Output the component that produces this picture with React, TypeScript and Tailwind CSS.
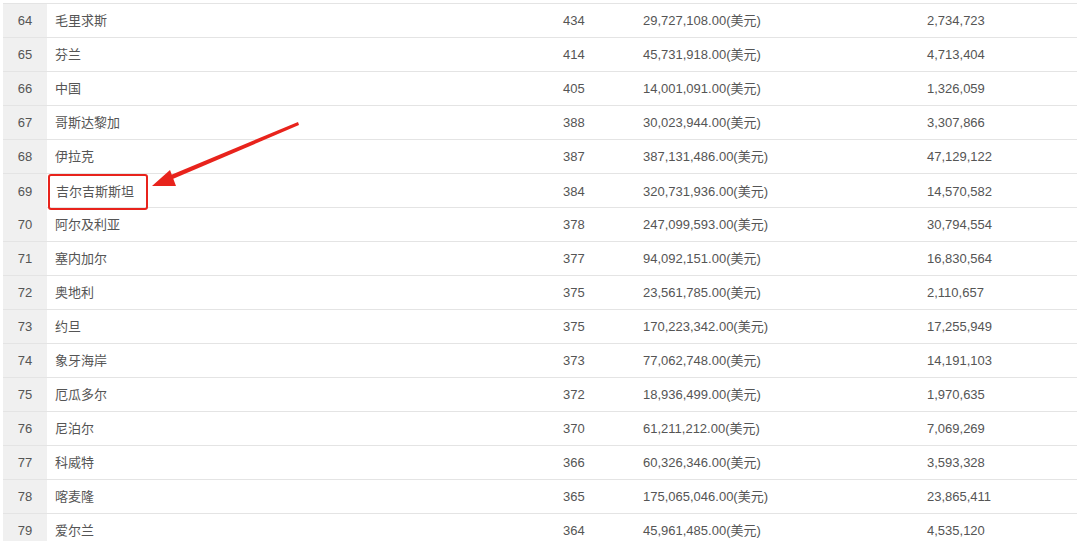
import React from "react";

const rows: [string, string, string, string, string][] = [
  ["64", "毛里求斯", "434", "29,727,108.00(美元)", "2,734,723"],
  ["65", "芬兰", "414", "45,731,918.00(美元)", "4,713,404"],
  ["66", "中国", "405", "14,001,091.00(美元)", "1,326,059"],
  ["67", "哥斯达黎加", "388", "30,023,944.00(美元)", "3,307,866"],
  ["68", "伊拉克", "387", "387,131,486.00(美元)", "47,129,122"],
  ["69", "吉尔吉斯斯坦", "384", "320,731,936.00(美元)", "14,570,582"],
  ["70", "阿尔及利亚", "378", "247,099,593.00(美元)", "30,794,554"],
  ["71", "塞内加尔", "377", "94,092,151.00(美元)", "16,830,564"],
  ["72", "奥地利", "375", "23,561,785.00(美元)", "2,110,657"],
  ["73", "约旦", "375", "170,223,342.00(美元)", "17,255,949"],
  ["74", "象牙海岸", "373", "77,062,748.00(美元)", "14,191,103"],
  ["75", "厄瓜多尔", "372", "18,936,499.00(美元)", "1,970,635"],
  ["76", "尼泊尔", "370", "61,211,212.00(美元)", "7,069,269"],
  ["77", "科威特", "366", "60,326,346.00(美元)", "3,593,328"],
  ["78", "喀麦隆", "365", "175,065,046.00(美元)", "23,865,411"],
  ["79", "爱尔兰", "364", "45,961,485.00(美元)", "4,535,120"],
];

export default function App() {
  return (
    <div
      className="relative w-[1080px] h-[541px] overflow-hidden bg-white text-[13px] text-[#555]"
      style={{ fontFamily: '"Liberation Sans", "Noto Sans CJK SC", sans-serif' }}
    >
      <div className="pt-[3px] pl-[3px] pr-[3px]">
        <div className="border-t border-[#e4e4e4]">
          {rows.map((r) => (
            <div
              key={r[0]}
              className="grid grid-cols-[44px_508px_80px_284px_1fr] h-[34px] border-b border-[#e4e4e4] items-stretch"
            >
              <div className="bg-[#f0f0f0] flex items-center justify-center">{r[0]}</div>
              <div className="flex items-center pl-[8px]">
                {r[0] === "69" ? (
                  <span className="-ml-[7px] px-[6px] h-[36px] w-[100px] flex items-center border-2 border-[#e8231c] rounded-[3px]">
                    {r[1]}
                  </span>
                ) : (
                  r[1]
                )}
              </div>
              <div className="flex items-center pl-[8px]">{r[2]}</div>
              <div className="flex items-center pl-[8px]">{r[3]}</div>
              <div className="flex items-center pl-[8px]">{r[4]}</div>
            </div>
          ))}
        </div>
      </div>
      <svg
        className="absolute left-0 top-0 pointer-events-none"
        width="1080"
        height="541"
        viewBox="0 0 1080 541"
      >
        <polygon points="298,122 299,125 168,181 166,177" fill="#e8231c" />
        <polygon points="152,186 170,170 176,186" fill="#e8231c" />
      </svg>
    </div>
  );
}
